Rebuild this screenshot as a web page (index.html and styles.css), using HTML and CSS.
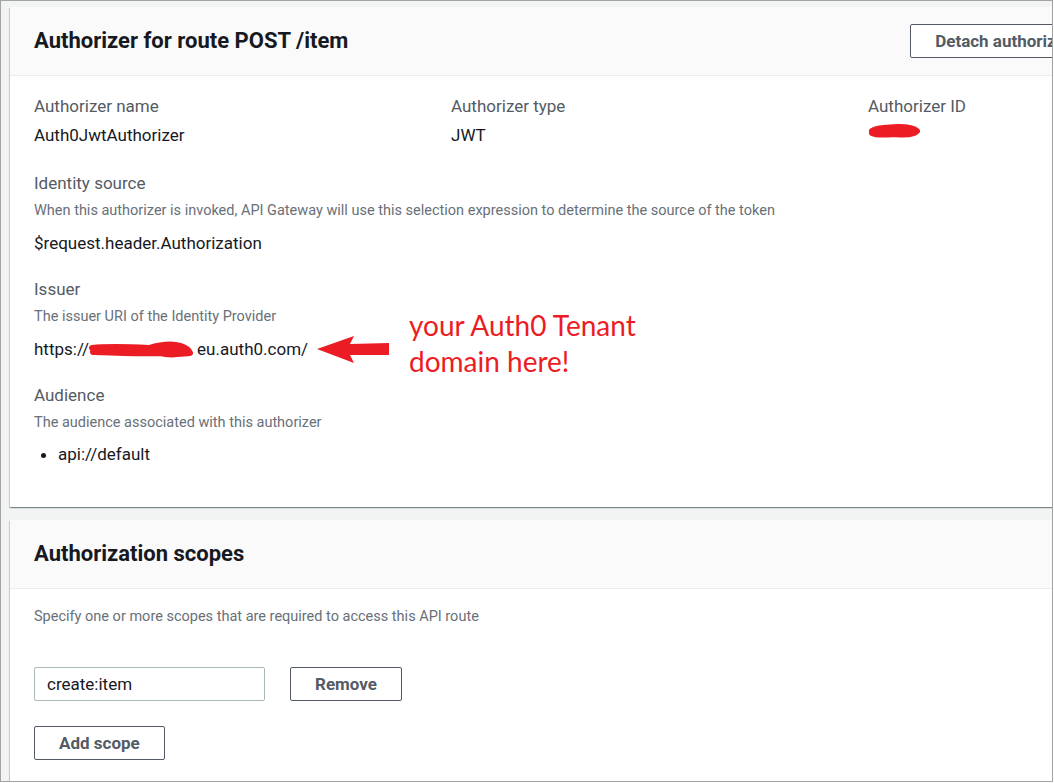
FILE: index.html
```html
<!DOCTYPE html>
<html lang="en">
<head>
  <meta charset="UTF-8">
  <title>Authorizer for route POST /item</title>
  <link rel="stylesheet" href="styles.css">
</head>
<body>

<div class="frame">
  <div class="cards">

    <div class="card">
      <div class="card-header">
        <h2>Authorizer for route POST /item</h2>
        <button class="btn">Detach authorizer</button>
      </div>
      <div class="card-body">
        <div class="columns">
          <div>
            <div class="label">Authorizer name</div>
            <div class="value">Auth0JwtAuthorizer</div>
          </div>
          <div>
            <div class="label">Authorizer type</div>
            <div class="value">JWT</div>
          </div>
          <div>
            <div class="label">Authorizer ID</div>
            <div class="value">
              <svg class="scribble" width="54" height="16" viewBox="0 0 54 16">
                <path d="M4 8 C10 4 20 5 30 4 C38 4 46 5 49 8 C46 12 36 12 26 11 C16 12 8 12 4 10" fill="#ec1c24" stroke="#ec1c24" stroke-width="6" stroke-linecap="round" stroke-linejoin="round"/>
              </svg>
            </div>
          </div>
        </div>

        <div class="field">
          <div class="label">Identity source</div>
          <div class="desc">When this authorizer is invoked, API Gateway will use this selection expression to determine the source of the token</div>
          <div class="value">$request.header.Authorization</div>
        </div>

        <div class="field">
          <div class="label">Issuer</div>
          <div class="desc">The issuer URI of the Identity Provider</div>
          <div class="value">https://<span class="redact"><svg width="108" height="22" viewBox="0 0 108 22">
            <path d="M3 9 C20 7 42 8 60 9 C70 6 82 4 92 7 C98 9 100 11 101 14 C90 15 80 17 72 14 C55 15 30 14 4 13" fill="#ec1c24" stroke="#ec1c24" stroke-width="6" stroke-linecap="round" stroke-linejoin="round"/>
          </svg></span>eu.auth0.com/</div>
        </div>

        <div class="field">
          <div class="label">Audience</div>
          <div class="desc">The audience associated with this authorizer</div>
          <ul class="audience">
            <li>api://default</li>
          </ul>
        </div>
      </div>
    </div>

    <div class="card">
      <div class="card-header">
        <h2>Authorization scopes</h2>
      </div>
      <div class="card-body">
        <div class="desc">Specify one or more scopes that are required to access this API route</div>
        <div class="scope-row">
          <input type="text" class="scope-input" value="create:item">
          <button class="btn">Remove</button>
        </div>
        <button class="btn">Add scope</button>
      </div>
    </div>

  </div>

  <!-- annotation drawn on top of the screenshot -->
  <svg class="arrow" width="74" height="32" viewBox="0 0 74 32">
    <polygon points="0,15 37,2 33,10 72,9 72,21 33,21 37,29" fill="#ec1c24"/>
  </svg>
  <div class="note">your Auth0 Tenant<br>domain here!</div>
</div>

</body>
</html>
```

FILE: styles.css
```css
body {
  margin: 0;
  background: #fff;
  font-family: Roboto, "Liberation Sans", sans-serif;
}

.frame {
  position: relative;
  width: 1053px;
  height: 782px;
  box-sizing: border-box;
  border: 1px solid #a3a3a3;
  background: #f2f3f3;
  overflow: hidden;
}

.cards {
  padding: 6px 0 0 9px;
}

.card {
  width: 1110px;
  background: #fff;
  box-shadow: 0 1px 1px 0 rgba(0, 28, 36, 0.35), 1px 1px 1px 0 rgba(0, 28, 36, 0.12), -1px 1px 1px 0 rgba(0, 28, 36, 0.12);
  margin-bottom: 13px;
}

.card-header {
  display: flex;
  align-items: center;
  justify-content: space-between;
  box-sizing: border-box;
  min-height: 69px;
  background: #fafafa;
  border-bottom: 1px solid #eaeded;
  padding: 0 24px;
}

.card-header h2 {
  margin: 0;
  font-size: 22px;
  line-height: 28px;
  font-weight: 700;
  color: #16191f;
}

.card-body {
  padding: 18px 24px 41px;
}

.columns {
  display: grid;
  grid-template-columns: 417px 417px 1fr;
  margin-bottom: 24px;
}

.label {
  font-size: 17px;
  line-height: 24px;
  color: #545b64;
}

.value {
  font-size: 17px;
  line-height: 24px;
  color: #16191f;
  margin-top: 5px;
}

.desc {
  font-size: 14.5px;
  line-height: 20px;
  color: #687078;
  margin-top: 6px;
}

.card-body > .desc {
  margin-top: 0;
}

.desc + .value {
  margin-top: 10px;
}

.field {
  margin-bottom: 22px;
}

.field:last-child {
  margin-bottom: 0;
}

.scribble {
  display: block;
  margin-top: 1px;
}

.redact {
  display: inline-block;
  width: 108px;
  height: 22px;
  vertical-align: -6px;
}

.audience {
  margin: 9px 0 0;
  padding-left: 24px;
  font-size: 17px;
  line-height: 24px;
  color: #16191f;
}

.btn {
  font-family: Roboto, "Liberation Sans", sans-serif;
  font-size: 17px;
  font-weight: 700;
  color: #545b64;
  background: #fff;
  border: 1px solid #545b64;
  border-radius: 2px;
  height: 34px;
  padding: 0 24px;
}

.scope-row {
  display: flex;
  gap: 25px;
  margin: 40px 0 25px;
}

.scope-input {
  width: 231px;
  height: 34px;
  box-sizing: border-box;
  border: 1px solid #aab7b8;
  border-radius: 2px;
  padding: 0 12px;
  font-family: Roboto, "Liberation Sans", sans-serif;
  font-size: 17px;
  color: #16191f;
}

.arrow {
  position: absolute;
  left: 316px;
  top: 333px;
}

.note {
  position: absolute;
  left: 408px;
  top: 306px;
  font-family: Lato, "Open Sans", sans-serif;
  font-size: 28px;
  line-height: 36px;
  color: #ec1c24;
}
```
